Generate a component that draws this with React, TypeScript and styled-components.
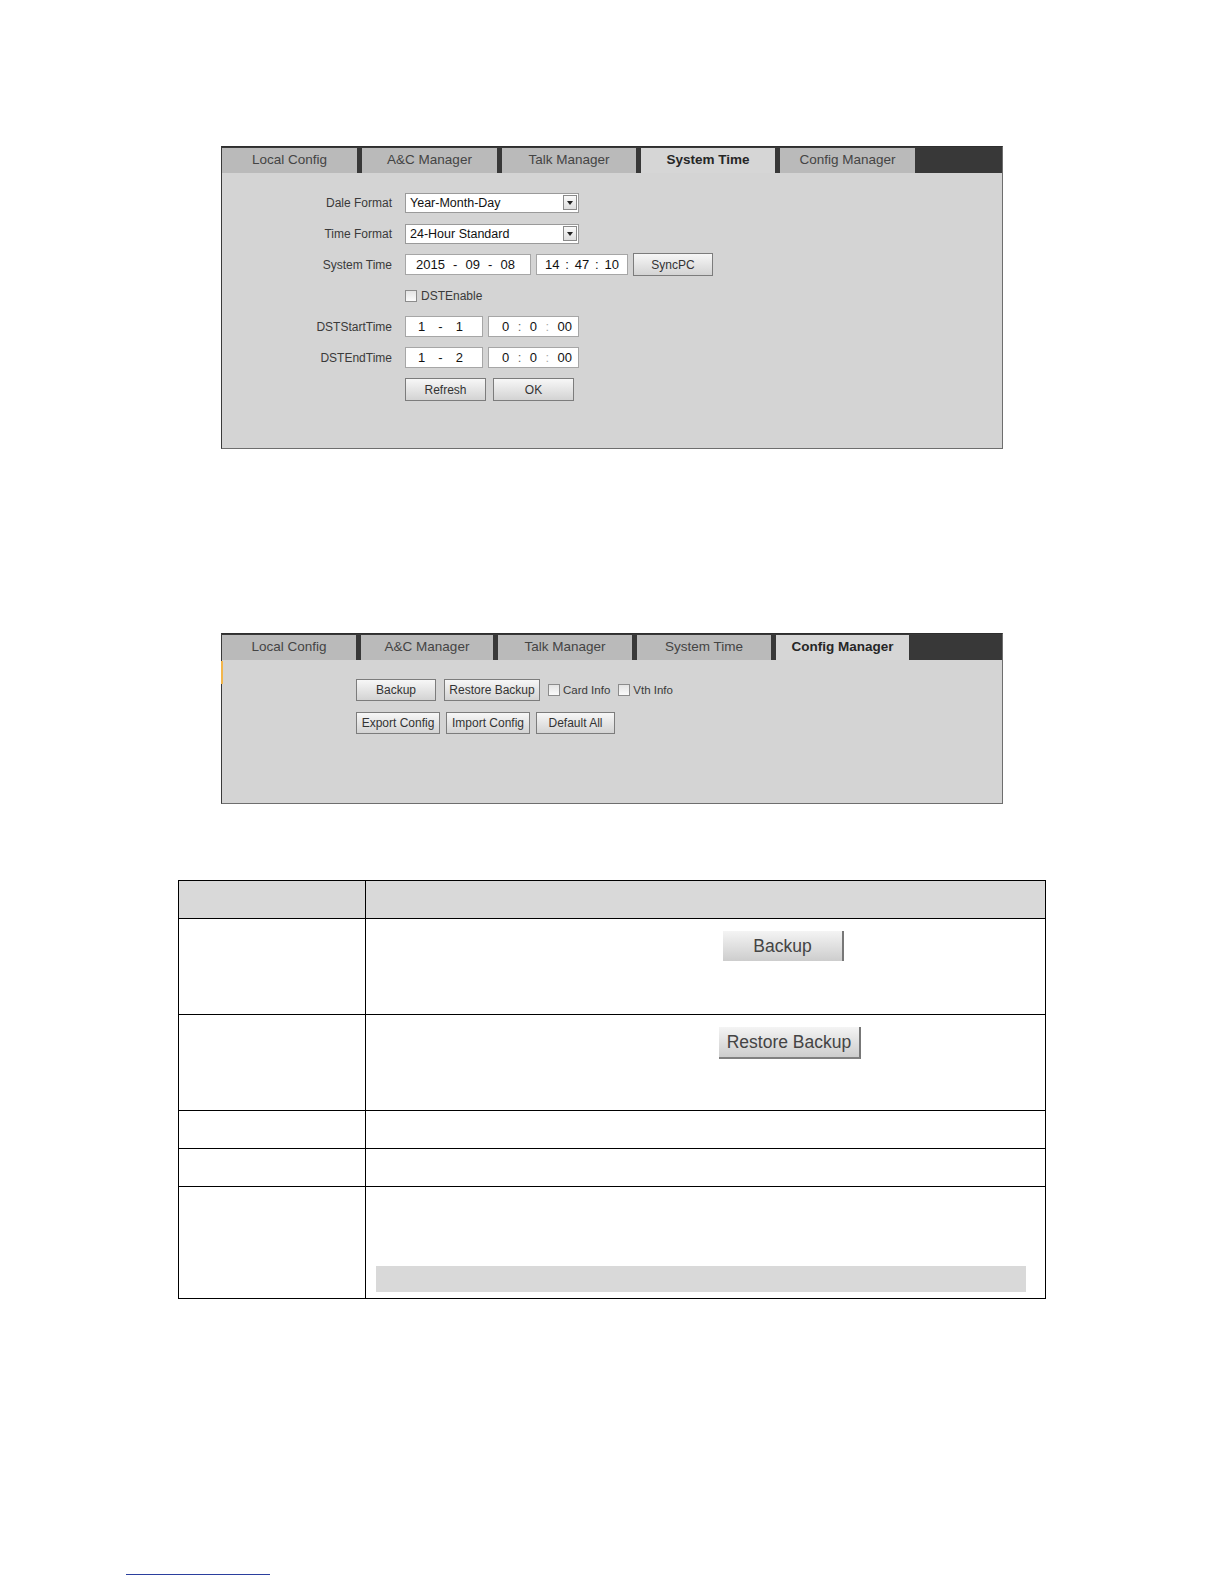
import styled, { createGlobalStyle } from "styled-components";

const GlobalStyle = createGlobalStyle`
  html, body {
    margin: 0;
    padding: 0;
    background: #ffffff;
  }
  body {
    font-family: "Liberation Sans", Arial, sans-serif;
    color: #333;
  }
`;

const Page = styled.div`
  width: 1224px;
  min-height: 1584px;
  padding-top: 146px;
  box-sizing: border-box;
  display: flex;
  flex-direction: column;
`;

const Panel = styled.section<{ $height: number; $gapAfter: number }>`
  margin-left: 221px;
  width: 782px;
  height: ${({ $height }) => $height}px;
  margin-bottom: ${({ $gapAfter }) => $gapAfter}px;
  box-sizing: border-box;
  border: 1px solid #6e6e6e;
  border-top-color: #2e2e2e;
  border-left-color: #3a3a3a;
  background: #d4d4d4;
  display: flex;
  flex-direction: column;
`;

const TabBar = styled.div`
  display: flex;
  gap: 5px;
  height: 26px;
  padding: 1px 0 0 0;
  box-sizing: border-box;
  background: #383838;
  flex-shrink: 0;
`;

const Tab = styled.div<{ $active?: boolean; $w: number }>`
  width: ${({ $w }) => $w}px;
  height: 25px;
  line-height: 24px;
  text-align: center;
  font-size: 13.5px;
  background: ${({ $active }) => ($active ? "#d6d6d6" : "#bababa")};
  color: ${({ $active }) => ($active ? "#262626" : "#444")};
  font-weight: ${({ $active }) => ($active ? 700 : 400)};
`;

const FormGrid = styled.div`
  display: grid;
  grid-template-columns: 170px auto;
  column-gap: 13px;
  row-gap: 10px;
  grid-auto-rows: 21px;
  padding-top: 19px;
  align-items: center;
`;

const Label = styled.div`
  text-align: right;
  font-size: 12px;
  color: #3a3a3a;
`;

const Controls = styled.div<{ $gap: number; $shift?: number }>`
  display: flex;
  align-items: center;
  gap: ${({ $gap }) => $gap}px;
  margin-top: ${({ $shift }) => $shift ?? 0}px;
`;

const Select = styled.div`
  width: 174px;
  height: 20px;
  box-sizing: border-box;
  border: 1px solid #9a9a9a;
  background: #fff;
  display: flex;
  align-items: center;
  justify-content: space-between;
  padding: 0 1px 0 4px;
  font-size: 12.5px;
  color: #111;
`;

const SelectArrow = styled.span`
  width: 14px;
  height: 15px;
  box-sizing: border-box;
  border: 1px solid #8a8a8a;
  background: linear-gradient(#fafafa, #dedede);
  display: flex;
  align-items: center;
  justify-content: center;
  &::after {
    content: "";
    border-left: 3px solid transparent;
    border-right: 3px solid transparent;
    border-top: 4px solid #222;
  }
`;

const Field = styled.div<{ $w: number; $pl: number; $pr: number }>`
  width: ${({ $w }) => $w}px;
  height: 21px;
  box-sizing: border-box;
  border: 1px solid #a6a6a6;
  background: #fff;
  display: flex;
  align-items: center;
  justify-content: space-between;
  padding: 0 ${({ $pr }) => $pr}px 0 ${({ $pl }) => $pl}px;
  font-size: 13px;
  color: #111;
`;

const Sep = styled.span<{ $tone: string }>`
  color: ${({ $tone }) => $tone};
`;

const Button = styled.button<{ $w: number; $h?: number }>`
  width: ${({ $w }) => $w}px;
  height: ${({ $h }) => $h ?? 22}px;
  padding: 0;
  box-sizing: border-box;
  border: 1px solid #7c7c7c;
  background: linear-gradient(#f7f7f7, #d3d3d3);
  font-family: "Liberation Sans", Arial, sans-serif;
  font-size: 12px;
  color: #333;
  white-space: nowrap;
`;

const Check = styled.span`
  width: 12px;
  height: 12px;
  box-sizing: border-box;
  border: 1px solid #8c8c8c;
  background: linear-gradient(#e4e4e4, #fbfbfb);
  flex-shrink: 0;
`;

const CheckLabel = styled.label<{ $size?: number }>`
  display: flex;
  align-items: center;
  gap: ${({ $size }) => ($size && $size >= 12 ? 4 : 3)}px;
  font-size: ${({ $size }) => $size ?? 11.5}px;
  color: #3a3a3a;
`;

const ManagerBody = styled.div`
  position: relative;
  flex: 1;
  padding: 19px 0 0 134px;
  display: flex;
  flex-direction: column;
  gap: 11px;
  &::before {
    content: "";
    position: absolute;
    left: -1px;
    top: 1px;
    width: 2px;
    height: 23px;
    background: #f2b64c;
  }
`;

const ButtonRow = styled.div<{ $gap: number }>`
  display: flex;
  align-items: center;
  gap: ${({ $gap }) => $gap}px;
`;

const Table = styled.table`
  margin-left: 178px;
  width: 868px;
  border-collapse: collapse;
  table-layout: fixed;
  td, th {
    border: 1px solid #000;
    padding: 0;
    vertical-align: top;
  }
`;

const HeadCell = styled.th`
  background: #d9d9d9;
  height: 37px;
`;

const Row = styled.tr<{ $h: number }>`
  height: ${({ $h }) => $h}px;
`;

const DescCell = styled.td<{ $pt: number }>`
  padding-top: ${({ $pt }) => $pt}px !important;
`;

const ShotButton = styled.div<{ $ml: number; $w: number; $h: number; $bottom?: boolean }>`
  margin-left: ${({ $ml }) => $ml}px;
  width: ${({ $w }) => $w}px;
  height: ${({ $h }) => $h}px;
  box-sizing: border-box;
  background: linear-gradient(#f4f4f4, #cdcdcd);
  border-right: 2px solid #777;
  border-bottom: ${({ $bottom }) => ($bottom ? "2px solid #808080" : "none")};
  display: flex;
  align-items: center;
  justify-content: center;
  font-size: 17.5px;
  color: #444;
`;

const NoteBar = styled.div`
  margin: 0 19px 0 10px;
  height: 26px;
  background: #d9d9d9;
`;

const FootRule = styled.div`
  margin: 275px 0 0 126px;
  width: 144px;
  height: 1px;
  background: #2b3f9e;
`;

export default function App() {
  return (
    <>
      <GlobalStyle />
      <Page>
        <Panel $height={303} $gapAfter={184}>
          <TabBar>
            <Tab $w={135}>Local Config</Tab>
            <Tab $w={135}>A&amp;C Manager</Tab>
            <Tab $w={134}>Talk Manager</Tab>
            <Tab $w={134} $active>System Time</Tab>
            <Tab $w={135}>Config Manager</Tab>
          </TabBar>
          <FormGrid>
            <Label>Dale Format</Label>
            <Controls $gap={5}>
              <Select>
                Year-Month-Day
                <SelectArrow />
              </Select>
            </Controls>

            <Label>Time Format</Label>
            <Controls $gap={5}>
              <Select>
                24-Hour Standard
                <SelectArrow />
              </Select>
            </Controls>

            <Label>System Time</Label>
            <Controls $gap={5}>
              <Field $w={126} $pl={10} $pr={15}>
                <span>2015</span>
                <span>-</span>
                <span>09</span>
                <span>-</span>
                <span>08</span>
              </Field>
              <Field $w={92} $pl={8} $pr={8}>
                <span>14</span>
                <span>:</span>
                <span>47</span>
                <span>:</span>
                <span>10</span>
              </Field>
              <Button $w={80} $h={23}>SyncPC</Button>
            </Controls>

            <div />
            <Controls $gap={5}>
              <CheckLabel $size={12}>
                <Check />
                DSTEnable
              </CheckLabel>
            </Controls>

            <Label>DSTStartTime</Label>
            <Controls $gap={5}>
              <Field $w={78} $pl={12} $pr={19}>
                <span>1</span>
                <span>-</span>
                <span>1</span>
              </Field>
              <Field $w={91} $pl={13} $pr={6}>
                <span>0</span>
                <Sep $tone="#666">:</Sep>
                <span>0</span>
                <Sep $tone="#aaa">:</Sep>
                <span>00</span>
              </Field>
            </Controls>

            <Label>DSTEndTime</Label>
            <Controls $gap={5}>
              <Field $w={78} $pl={12} $pr={19}>
                <span>1</span>
                <span>-</span>
                <span>2</span>
              </Field>
              <Field $w={91} $pl={13} $pr={6}>
                <span>0</span>
                <Sep $tone="#666">:</Sep>
                <span>0</span>
                <Sep $tone="#aaa">:</Sep>
                <span>00</span>
              </Field>
            </Controls>

            <div />
            <Controls $gap={7} $shift={2}>
              <Button $w={81} $h={23}>Refresh</Button>
              <Button $w={81} $h={23}>OK</Button>
            </Controls>
          </FormGrid>
        </Panel>

        <Panel $height={171} $gapAfter={76}>
          <TabBar>
            <Tab $w={134}>Local Config</Tab>
            <Tab $w={132}>A&amp;C Manager</Tab>
            <Tab $w={134}>Talk Manager</Tab>
            <Tab $w={134}>System Time</Tab>
            <Tab $w={133} $active>Config Manager</Tab>
          </TabBar>
          <ManagerBody>
            <ButtonRow $gap={8}>
              <Button $w={80}>Backup</Button>
              <Button $w={96}>Restore Backup</Button>
              <CheckLabel>
                <Check />
                Card Info
              </CheckLabel>
              <CheckLabel>
                <Check />
                Vth Info
              </CheckLabel>
            </ButtonRow>
            <ButtonRow $gap={6}>
              <Button $w={84}>Export Config</Button>
              <Button $w={84}>Import Config</Button>
              <Button $w={79}>Default All</Button>
            </ButtonRow>
          </ManagerBody>
        </Panel>

        <Table>
          <colgroup>
            <col style={{ width: 187 }} />
            <col />
          </colgroup>
          <thead>
            <tr>
              <HeadCell />
              <HeadCell />
            </tr>
          </thead>
          <tbody>
            <Row $h={96}>
              <td />
              <DescCell $pt={12}>
                <ShotButton $ml={357} $w={121} $h={30}>
                  Backup
                </ShotButton>
              </DescCell>
            </Row>
            <Row $h={96}>
              <td />
              <DescCell $pt={12}>
                <ShotButton $ml={353} $w={142} $h={32} $bottom>
                  Restore Backup
                </ShotButton>
              </DescCell>
            </Row>
            <Row $h={38}>
              <td />
              <td />
            </Row>
            <Row $h={38}>
              <td />
              <td />
            </Row>
            <Row $h={112}>
              <td />
              <DescCell $pt={79}>
                <NoteBar />
              </DescCell>
            </Row>
          </tbody>
        </Table>

        <FootRule />
      </Page>
    </>
  );
}
